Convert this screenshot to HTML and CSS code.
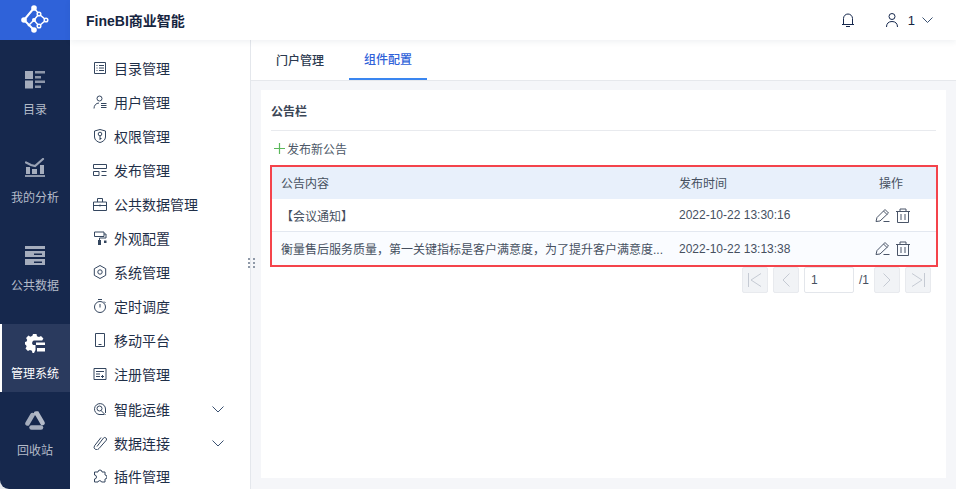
FILE: index.html
```html
<!DOCTYPE html>
<html lang="zh">
<head>
<meta charset="utf-8">
<title>FineBI</title>
<link rel="stylesheet" href="styles.css">
</head>
<body>
<div class="app">
  <aside class="rail">
    <div class="logo">
      <svg width="70" height="40" viewBox="0 0 70 40" fill="none" stroke="#fff" stroke-width="1.500"><path stroke-width="2" d="M34 8L24 20l10 10"/><path d="M34 8l5 6 7 6-7 6-5-6-6 6M39 14l-5 6"/><circle cx="34" cy="8" r="2.800" fill="#fff" stroke="none"/><circle cx="24" cy="20" r="2.800" fill="#fff" stroke="none"/><circle cx="34" cy="30" r="2.800" fill="#fff" stroke="none"/><circle cx="39" cy="14" r="1.800" fill="#2f62d9"/><circle cx="46" cy="20" r="1.800" fill="#2f62d9"/><circle cx="39" cy="26" r="1.800" fill="#2f62d9"/><circle cx="34" cy="20" r="2" fill="#fff" stroke="none"/></svg>
    </div>
    <nav class="rail-list">
      <a class="rail-item">
        <svg width="20" height="19" viewBox="0 0 20 19"><path fill="#a5adbd" d="M0 1h8v8H0zM0 10.500h8v8H0z"/><path fill="#8e97aa" d="M10 1h10v2.500H10zM10 6h6v2.500h-6zM10 10.500h10V13H10zM10 15.500h6V18h-6z"/></svg>
        <span>目录</span>
      </a>
      <a class="rail-item">
        <svg width="20" height="19" viewBox="0 0 20 19"><path fill="none" stroke="#9aa3b5" stroke-width="2.200" stroke-linecap="round" d="M1 4.500l5 2.500 4 1 8-7"/><path fill="#a5adbd" d="M1 9h4v7H1zM7 11h5v5H7zM15 7h4v9h-4z"/><path fill="#8e97aa" d="M0 17h20v2H0z"/></svg>
        <span>我的分析</span>
      </a>
      <a class="rail-item">
        <svg width="20" height="19" viewBox="0 0 20 19"><path fill="#a5adbd" d="M0 0h20v3H0zM0 5h20v6H0zM0 13h20v6H0z"/><path fill="#16284d" d="M9 7.500h8v1.500H9zM9 15.500h8V17H9z"/></svg>
        <span>公共数据</span>
      </a>
      <a class="rail-item rail-item-active">
        <svg width="20" height="19" viewBox="0 0 20 19"><path fill="#fff" d="M8 0h3.500l.5 2.200 2 .9 2-1 2.400 2.500-1.200 2H10a2.500 2.500 0 0 0-2 4.400h2.500V16l-.5 1-1 2H7.500l-.6-2.200-2-.9-2 1.100L.5 14.400l1.100-2-.6-1.500L0 10.400V8l1.600-.5.6-1.500-1.100-2L3.400 1.600l2 1.100 2-.9z"/><path fill="#fff" d="M11 8.500h9v2.500h-9zM12 14h8v3.500h-8z"/></svg>
        <span>管理系统</span>
      </a>
      <a class="rail-item rail-item-last">
        <svg width="20" height="19" viewBox="0 0 20 19" fill="none" stroke-linecap="round"><path stroke="#a5adbd" stroke-width="4.500" d="M7.500 4L2.500 12.500"/><path stroke="#b3bac8" stroke-width="4.500" d="M11 2.500h1L17.500 12"/><path stroke="#a5adbd" stroke-width="4.500" d="M6.500 16.500h9.500"/></svg>
        <span>回收站</span>
      </a>
    </nav>
  </aside>

  <div class="body">
    <header class="topbar">
      <div class="brand">FineBI商业智能</div>
      <div class="top-actions">
        <svg width="12" height="14" viewBox="0 0 12 14" fill="none" stroke="#16284d"><path d="M1.500 11V5.500a4.500 4.500 0 0 1 9 0V11M0 11.500h12M4 13.500h4"/></svg>
        <svg class="user" width="12" height="14" viewBox="0 0 12 14" fill="none" stroke="#16284d"><circle cx="6" cy="3.500" r="3"/><path d="M.5 14c0-3.500 2-5.500 5.500-5.500s5.500 2 5.500 5.500"/></svg>
        <span class="user-id">1</span>
        <svg width="11" height="6" viewBox="0 0 11 6" fill="none" stroke="#3a5070"><path d="M.5.500l5 5 5-5"/></svg>
      </div>
    </header>

    <div class="content">
      <nav class="menu">
        <a class="menu-row"><svg class="mi" viewBox="0 0 14 14" fill="none" stroke="#34465f"><path d="M1.500 1.500h11v11h-11zM3.500 4.500h1M3.500 7h1M3.500 9.500h1M6 4.500h5M6 7h5M6 9.500h5"/></svg><span>目录管理</span></a>
        <a class="menu-row"><svg class="mi" viewBox="0 0 14 14" fill="none" stroke="#34465f"><circle cx="6.500" cy="3.500" r="2.500"/><path d="M1 13.500c0-3 2-5.500 5-5.500M8 8.500h5.500M8 10.500h5.500M8 12.500h5.500"/></svg><span>用户管理</span></a>
        <a class="menu-row"><svg class="mi" viewBox="0 0 14 14" fill="none" stroke="#34465f"><path d="M7 .5l5.500 1.500v6c0 3-3 5-5.500 5.500C4.500 13 1.500 11 1.500 8V2z"/><circle cx="7" cy="5" r="1.800"/><path d="M7 7v4M7 9.500h1.500"/></svg><span>权限管理</span></a>
        <a class="menu-row"><svg class="mi" viewBox="0 0 14 14" fill="none" stroke="#34465f"><path d="M.5 1.500h13v4H.5zM.5 8.500h5.500v4H.5zM8.500 8.500h5M8.500 12.500h5"/></svg><span>发布管理</span></a>
        <a class="menu-row"><svg class="mi" viewBox="0 0 14 14" fill="none" stroke="#34465f"><path d="M.5 5h13v8.500H.5zM4.500 5V1.500h5V5M.5 8.500h13M7 7.500v2"/></svg><span>公共数据管理</span></a>
        <a class="menu-row"><svg class="mi" viewBox="0 0 14 14" fill="none" stroke="#34465f"><path d="M1.500 1h9.500v4.500H1.500zM11 3h2v4H6.500v2"/><path fill="#34465f" d="M5 9h3v5H5zM11 9.500h2.500v2.500H11z" stroke="none"/></svg><span>外观配置</span></a>
        <a class="menu-row"><svg class="mi" viewBox="0 0 14 14" fill="none" stroke="#34465f"><path d="M7 .5l5.700 3.200v6.600L7 13.500l-5.700-3.200V3.700z"/><circle cx="7" cy="7" r="2.200"/></svg><span>系统管理</span></a>
        <a class="menu-row"><svg class="mi" viewBox="0 0 14 14" fill="none" stroke="#34465f"><circle cx="7" cy="8" r="5.500"/><path d="M5 .5h4M7 5v3.500M11 2.500l1.500 1.500"/></svg><span>定时调度</span></a>
        <a class="menu-row"><svg class="mi" viewBox="0 0 14 14" fill="none" stroke="#34465f"><path d="M2.500.5h9v13h-9zM5.500 11.500h3"/></svg><span>移动平台</span></a>
        <a class="menu-row"><svg class="mi" viewBox="0 0 14 14" fill="none" stroke="#34465f"><path d="M1 1.500h12v11H1zM3 4.500h8M3 7h4M3 9.500h4M8 9.500h3M9.500 8v3"/></svg><span>注册管理</span></a>
        <a class="menu-row menu-row-sub"><svg class="mi" viewBox="0 0 14 14" fill="none" stroke="#34465f"><path d="M11 12.500H6A5.500 5.500 0 1 1 12.500 7v4"/><circle cx="6.500" cy="6.500" r="2.500"/><path d="M8 8.500l4.500 4.500"/></svg><span>智能运维</span><svg class="chev" width="12" height="7" viewBox="0 0 12 7" fill="none" stroke="#3a5070"><path d="M.5.500L6 6l5.500-5.500"/></svg></a>
        <a class="menu-row menu-row-sub"><svg class="mi" viewBox="0 0 14 14" fill="none" stroke="#34465f"><path d="M4 10.500L10.500 2a1.800 1.800 0 0 1 2.800 2.200L6 12.500a2.600 2.600 0 0 1-4.500-2.700L8 1.500"/></svg><span>数据连接</span><svg class="chev" width="12" height="7" viewBox="0 0 12 7" fill="none" stroke="#3a5070"><path d="M.5.500L6 6l5.500-5.500"/></svg></a>
        <a class="menu-row"><svg class="mi" viewBox="0 0 14 14" fill="none" stroke="#34465f"><path d="M5 3a2 2 0 0 1 4 0h3v3a2 2 0 0 1 0 4v3H8.500a1.800 1.800 0 0 0-3.500 0H1.500v-3a2 2 0 0 0 0-4V3z"/></svg><span>插件管理</span></a>
      </nav>

      <main class="main">
        <div class="grip" aria-hidden="true"><i></i><i></i><i></i><i></i><i></i><i></i></div>
        <div class="tabs">
          <a class="tab">门户管理</a>
          <a class="tab tab-active">组件配置</a>
        </div>
        <div class="pane">
          <section class="card">
            <h2 class="card-title">公告栏</h2>
            <a class="add"><svg width="11" height="11" viewBox="0 0 11 11" stroke="#5cb85c" stroke-width="1.200"><path d="M5.500 0v11M0 5.500h11"/></svg>发布新公告</a>
            <div class="table">
              <div class="tr th"><div class="c1">公告内容</div><div class="c2">发布时间</div><div class="c3">操作</div></div>
              <div class="tr"><div class="c1">【会议通知】</div><div class="c2">2022-10-22 13:30:16</div><div class="c3 ops">
                <svg width="15" height="15" viewBox="0 0 15 15" fill="none" stroke="#4a5568"><path d="M1 13.500l1-4L10 1.500 13.500 5 5 13zM8.500 3l3.500 3.500M8.500 13.500h6"/></svg>
                <svg width="14" height="15" viewBox="0 0 14 15" fill="none" stroke="#4a5568"><path d="M0 3.500h14M4 3V1h6v2M1.500 3.500v11h11v-11M5 6v6M9 6v6"/></svg>
              </div></div>
              <div class="tr tr-alt"><div class="c1">衡量售后服务质量，第一关键指标是客户满意度，为了提升客户满意度...</div><div class="c2">2022-10-22 13:13:38</div><div class="c3 ops">
                <svg width="15" height="15" viewBox="0 0 15 15" fill="none" stroke="#4a5568"><path d="M1 13.500l1-4L10 1.500 13.500 5 5 13zM8.500 3l3.500 3.500M8.500 13.500h6"/></svg>
                <svg width="14" height="15" viewBox="0 0 14 15" fill="none" stroke="#4a5568"><path d="M0 3.500h14M4 3V1h6v2M1.500 3.500v11h11v-11M5 6v6M9 6v6"/></svg>
              </div></div>
            </div>
            <div class="pager">
              <span class="pg"><svg width="16" height="14" viewBox="0 0 16 14" fill="none" stroke="#c5cad3"><path d="M1.500 0v14M14 .5L4 7l10 6.500"/></svg></span>
              <span class="pg"><svg width="8" height="14" viewBox="0 0 8 14" fill="none" stroke="#c5cad3"><path d="M7.500.5L1 7l6.500 6.500"/></svg></span>
              <span class="pg-input">1</span>
              <span class="pg-total">/1</span>
              <span class="pg"><svg width="8" height="14" viewBox="0 0 8 14" fill="none" stroke="#c5cad3"><path d="M.5.500L7 7 .5 13.500"/></svg></span>
              <span class="pg"><svg width="16" height="14" viewBox="0 0 16 14" fill="none" stroke="#c5cad3"><path d="M14.500 0v14M2 .5L12 7 2 13.500"/></svg></span>
            </div>
          </section>
        </div>
      </main>
    </div>
  </div>
</div>
</body>
</html>
```
FILE: styles.css
```css
* { box-sizing: border-box; }
html, body { margin: 0; height: 100%; overflow: hidden; }
body { font-family: "Noto Sans CJK SC", "Noto Sans", sans-serif; font-size: 13px; color: #2c3a4f; background: #fff; }
a { color: inherit; text-decoration: none; }
.app { display: flex; width: 956px; height: 489px; overflow: hidden; background: #e6e8ec; }

.rail { width: 70px; flex: none; background: #16284d; color: #b4bbc9; border-bottom-left-radius: 9px; }
.logo { height: 40px; background: #2f62d9; }
.logo svg { display: block; }
.rail-list { display: flex; flex-direction: column; gap: 20px; padding-top: 20px; }
.rail-item { height: 68px; display: flex; flex-direction: column; align-items: center; padding-top: 10px; font-size: 12px; line-height: 18px; }
.rail-item span { margin-top: 11px; }
.rail-item-active { background: #2a3a5e; box-shadow: inset 2px 0 0 #fff; color: #fff; }
.rail-item-last { margin-top: -11px; }

.body { flex: 1; min-width: 0; display: flex; flex-direction: column; }
.topbar { height: 40px; flex: none; display: flex; align-items: center; justify-content: space-between; padding: 0 23px 0 16px; background: #fff; box-shadow: 0 2px 6px rgba(30, 50, 90, .07); position: relative; z-index: 2; }
.brand { font-family: "Liberation Sans", "Noto Sans CJK SC", sans-serif; font-size: 14px; font-weight: 700; color: #16253f; }
.top-actions { display: flex; align-items: center; color: #16253f; }
.user { margin-left: 32px; }
.user-id { margin: 0 7px 0 10px; font-family: "Liberation Sans", sans-serif; font-size: 13px; }

.content { flex: 1; min-height: 0; display: flex; }
.menu { width: 181px; flex: none; padding-top: 11px; border-right: 1px solid #e4e7ec; background: #fff; }
.menu-row { height: 34px; display: flex; align-items: center; padding-left: 23px; padding-right: 26px; font-size: 14px; color: #1f2f48; }
.menu-row-sub { padding-top: 2px; }
.mi { width: 14px; height: 14px; flex: none; margin-right: 7px; }
.chev { margin-left: auto; }

.main { flex: 1; min-width: 0; display: flex; flex-direction: column; background: #f5f6f9; position: relative; }
.grip { position: absolute; left: -3px; top: 218px; width: 7px; display: grid; grid-template-columns: 2px 2px; gap: 2px 3px; z-index: 1; }
.grip i { height: 2px; background: #8f99a8; }
.tabs { height: 41px; flex: none; display: flex; gap: 10px; padding-left: 10px; background: #fff; border-bottom: 1px solid #e6e8ec; }
.tab { width: 78px; height: 40px; display: flex; align-items: center; justify-content: center; padding-bottom: 2px; font-size: 12px; color: #2c3a4f; font-weight: 500; }
.tab-active { color: #2f62d9; border-bottom: 2px solid #3a86f0; }
.pane { flex: 1; min-height: 0; padding: 9px 10px 11px 10px; }
.card { height: 100%; background: #fff; padding: 0 10px; }
.card-title { margin: 0; height: 41px; display: flex; align-items: center; font-size: 12px; font-weight: 700; color: #3b4656; border-bottom: 1px solid #e8eaee; }
.add { height: 34px; display: flex; align-items: center; gap: 2px; padding-left: 3px; font-size: 12px; color: #4c5868; }
.table { border: 2px solid #f4434b; margin: 0 -2px 0 -1px; font-size: 12px; color: #46505f; font-family: "Liberation Sans", "Noto Sans CJK SC", sans-serif; }
.tr { height: 33px; display: flex; align-items: center; padding-left: 9px; border-bottom: 1px solid #e3e8f0; }
.tr:last-child { border-bottom: 0; }
.th { height: 32px; background: #e8f0fb; border-bottom: 0; padding-bottom: 2px; }
.tr-alt { background: #fafcff; }
.c1 { width: 398px; flex: none; white-space: nowrap; padding-right: 8px; }
.c2 { width: 190px; flex: none; }
.c3 { flex: 1; padding-left: 10px; }
.ops { display: flex; gap: 6px; padding-left: 6px; }
.pager { display: flex; justify-content: flex-end; align-items: center; gap: 5px; padding-right: 5px; }
.pg { width: 26px; height: 26px; display: flex; align-items: center; justify-content: center; background: #f1f3f6; border: 1px solid #e8eaee; border-radius: 2px; }
.pg-input { width: 50px; height: 26px; display: flex; align-items: center; padding-left: 6px; border: 1px solid #e3e6eb; border-radius: 2px; font-family: "Liberation Sans", sans-serif; font-size: 12px; color: #46505f; }
.pg-total { width: 10px; font-size: 12px; font-family: "Liberation Sans", sans-serif; color: #46505f; }
```
